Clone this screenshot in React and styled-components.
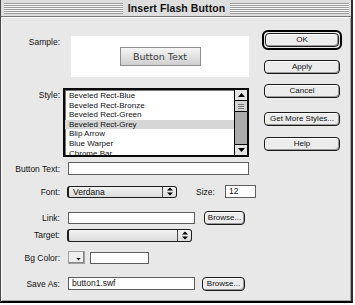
import React from 'react';
import styled, { createGlobalStyle } from 'styled-components';

const Global = createGlobalStyle`
  html, body { margin: 0; padding: 0; background: #fff; }
  body { font-family: "Liberation Sans", Arial, sans-serif; color: #000; }
`;

const Window = styled.div`
  width: 350px;
  height: 301px;
  border-left: 1px solid #474747;
  border-right: 2px solid #2e2e2e;
  border-bottom: 2px solid #000;
  background: #e8e8e8;
  display: flex;
  flex-direction: column;
`;

const TitleBar = styled.div`
  height: 16px;
  border-bottom: 1px solid #7a7a7a;
  background: #dedede;
  display: flex;
  align-items: center;
  padding: 0 2px 0 3px;
  gap: 5px;
`;

const Stripes = styled.div`
  flex: 1;
  height: 11px;
  background: repeating-linear-gradient(to bottom, #9c9c9c 0 1px, #f6f6f6 1px 2px);
`;

const Title = styled.div`
  font-weight: bold;
  font-size: 10.5px;
  line-height: 14px;
  color: #111;
  letter-spacing: 0.1px;
`;

const Body = styled.div`
  flex: 1;
  display: flex;
  box-shadow: inset 1px 1px 0 #fbfbfb, inset -1px -1px 0 #a4a4a4;
`;

const FormCol = styled.div`
  width: 261px;
  display: flex;
  flex-direction: column;
`;

const Row = styled.div`
  display: flex;
  align-items: ${p => (p.$top ? 'flex-start' : 'center')};
  margin-top: ${p => p.$mt}px;
  height: ${p => p.$h}px;
`;

const Label = styled.div`
  width: 59px;
  flex-shrink: 0;
  text-align: right;
  font-size: 8.5px;
  line-height: 10px;
  padding-top: ${p => p.$pt || 0}px;
  color: #111;
`;

const InlineLabel = styled.span`
  font-size: 8.5px;
  line-height: 10px;
  color: #111;
  margin: 0 ${p => p.$mr || 0}px 0 ${p => p.$ml || 0}px;
`;

const Controls = styled.div`
  margin-left: ${p => (p.$indent ?? 7)}px;
  display: flex;
  align-items: center;
  gap: ${p => p.$gap || 0}px;
  height: 100%;
`;

const SampleBox = styled.div`
  width: 178px;
  height: 41px;
  background: #fff;
  display: flex;
  align-items: center;
  justify-content: center;
`;

const SampleButton = styled.div`
  width: 79px;
  height: 17px;
  border: 1px solid #8e8e8e;
  background: linear-gradient(to bottom, #f6f6f6, #cfcfcf);
  font-family: "DejaVu Sans", Verdana, sans-serif;
  font-size: 9.5px;
  line-height: 17px;
  text-align: center;
  color: #3a3a3a;
  margin-top: -1px;
`;

const ListBox = styled.div`
  width: 182px;
  height: 65px;
  border: 2px solid #0a0a0a;
  box-shadow: inset 1px 1px 0 #777;
  background: #fff;
  display: flex;
`;

const Items = styled.div`
  flex: 1;
  overflow: hidden;
  padding-top: 1px;
`;

const Item = styled.div`
  font-size: 8px;
  line-height: 9.6px;
  height: 9.6px;
  padding-left: 4px;
  white-space: nowrap;
  color: #111;
  background: ${p => (p.$sel ? '#d6d6d6' : 'transparent')};
`;

const ScrollBar = styled.div`
  width: 12px;
  border-left: 1px solid #000;
  display: flex;
  flex-direction: column;
  background: #ababab;
`;

const ScrollArrow = styled.div`
  height: 10px;
  background: #e4e4e4;
  border-${p => (p.$down ? 'top' : 'bottom')}: 1px solid #000;
  display: flex;
  align-items: center;
  justify-content: center;
`;

const Thumb = styled.div`
  height: 10px;
  background: #d4d4d4;
  border-bottom: 1px solid #000;
  display: flex;
  flex-direction: column;
  justify-content: center;
  gap: 1px;
  padding: 0 3px;
`;

const Ridge = styled.div`
  height: 1px;
  background: #777;
`;

const Track = styled.div`
  flex: 1;
`;

const TextInput = styled.div`
  width: ${p => p.$w}px;
  height: ${p => p.$h || 13}px;
  box-sizing: border-box;
  border: 1px solid #5e5e5e;
  background: #fff;
  font-size: 8.5px;
  line-height: 11px;
  padding-left: 3px;
  color: #111;
`;

const Popup = styled.div`
  width: ${p => p.$w}px;
  height: ${p => p.$h || 12}px;
  box-sizing: border-box;
  border: 1px solid #1e1e1e;
  border-left-width: 2px;
  border-radius: 3px;
  background: linear-gradient(to bottom, #f2f2f2, #dcdcdc);
  display: flex;
`;

const PopupText = styled.div`
  flex: 1;
  font-size: 8.5px;
  line-height: 10px;
  padding-left: 4px;
  color: #111;
`;

const PopupArrows = styled.div`
  width: 13px;
  border-left: 1px solid #4a4a4a;
  display: flex;
  align-items: center;
  justify-content: center;
`;

const PushButton = styled.div`
  width: ${p => p.$w || 76}px;
  height: ${p => p.$h || 14}px;
  box-sizing: border-box;
  border: 1px solid #1a1a1a;
  border-radius: 4px;
  background: #ececec;
  box-shadow: inset 1px 1px 0 #fff, inset -1px -1px 0 #9a9a9a;
  font-size: 8px;
  line-height: 12px;
  text-align: center;
  color: #111;
  margin-top: ${p => p.$mt || 0}px;
  white-space: nowrap;
`;

const DefaultRing = styled.div`
  border: 2px solid #000;
  border-radius: 6px;
  padding: 1px;
  margin-top: ${p => p.$mt || 0}px;
`;

const ButtonCol = styled.div`
  width: 80px;
  display: flex;
  flex-direction: column;
  align-items: center;
`;

const Swatch = styled.div`
  width: 17px;
  height: 13px;
  box-sizing: border-box;
  border: 1px solid #a0a0a0;
  box-shadow: inset -1px -1px 0 #888;
  background: #efefef;
  display: flex;
  align-items: flex-end;
  justify-content: flex-end;
  padding: 0 3px 2px 0;
`;

const Tri = ({ down, size = 5 }) => (
  <svg width={size + 2} height={size} viewBox="0 0 7 5">
    {down ? <polygon points="0,0 7,0 3.5,4" fill="#000" /> : <polygon points="0,4 7,4 3.5,0" fill="#000" />}
  </svg>
);

const UpDown = () => (
  <svg width="6" height="9" viewBox="0 0 6 9">
    <polygon points="0,3.5 6,3.5 3,0.5" fill="#000" />
    <polygon points="0,5.5 6,5.5 3,8.5" fill="#000" />
  </svg>
);

const styles = [
  'Beveled Rect-Blue',
  'Beveled Rect-Bronze',
  'Beveled Rect-Green',
  'Beveled Rect-Grey',
  'Blip Arrow',
  'Blue Warper',
  'Chrome Bar',
];

export default function App() {
  return (
    <>
      <Global />
      <Window>
        <TitleBar>
          <Stripes />
          <Title>Insert Flash Button</Title>
          <Stripes />
        </TitleBar>
        <Body>
          <FormCol>
            <Row $mt={19} $h={41} $top>
              <Label $pt={1}>Sample:</Label>
              <Controls $indent={11}>
                <SampleBox>
                  <SampleButton>Button Text</SampleButton>
                </SampleBox>
              </Controls>
            </Row>
            <Row $mt={11} $h={69} $top>
              <Label $pt={2}>Style:</Label>
              <Controls $indent={3}>
                <ListBox>
                  <Items>
                    {styles.map((s, i) => (
                      <Item key={s} $sel={i === 3}>{s}</Item>
                    ))}
                  </Items>
                  <ScrollBar>
                    <ScrollArrow><Tri /></ScrollArrow>
                    <Thumb><Ridge /><Ridge /><Ridge /></Thumb>
                    <Track />
                    <ScrollArrow $down><Tri down /></ScrollArrow>
                  </ScrollBar>
                </ListBox>
              </Controls>
            </Row>
            <Row $mt={5} $h={13}>
              <Label>Button Text:</Label>
              <Controls $indent={8}>
                <TextInput $w={181} />
              </Controls>
            </Row>
            <Row $mt={10} $h={13}>
              <Label>Font:</Label>
              <Controls>
                <Popup $w={110}>
                  <PopupText>Verdana</PopupText>
                  <PopupArrows><UpDown /></PopupArrows>
                </Popup>
                <InlineLabel $ml={19} $mr={10}>Size:</InlineLabel>
                <TextInput $w={31}>12</TextInput>
              </Controls>
            </Row>
            <Row $mt={13} $h={14}>
              <Label>Link:</Label>
              <Controls $indent={8} $gap={9}>
                <TextInput $w={127} $h={12} />
                <PushButton $w={41}>Browse...</PushButton>
              </Controls>
            </Row>
            <Row $mt={3} $h={14}>
              <Label>Target:</Label>
              <Controls>
                <Popup $w={125} $h={13}>
                  <PopupText />
                  <PopupArrows><UpDown /></PopupArrows>
                </Popup>
              </Controls>
            </Row>
            <Row $mt={9} $h={13}>
              <Label>Bg Color:</Label>
              <Controls $indent={8} $gap={5}>
                <Swatch><Tri down size={3} /></Swatch>
                <TextInput $w={59} $h={12} />
              </Controls>
            </Row>
            <Row $mt={12} $h={15}>
              <Label>Save As:</Label>
              <Controls $indent={8} $gap={7}>
                <TextInput $w={127}>button1.swf</TextInput>
                <PushButton $w={43}>Browse...</PushButton>
              </Controls>
            </Row>
          </FormCol>
          <ButtonCol>
            <DefaultRing $mt={13}>
              <PushButton $w={74}>OK</PushButton>
            </DefaultRing>
            <PushButton $mt={10}>Apply</PushButton>
            <PushButton $mt={10}>Cancel</PushButton>
            <PushButton $mt={14}>Get More Styles...</PushButton>
            <PushButton $mt={11}>Help</PushButton>
          </ButtonCol>
        </Body>
      </Window>
    </>
  );
}
